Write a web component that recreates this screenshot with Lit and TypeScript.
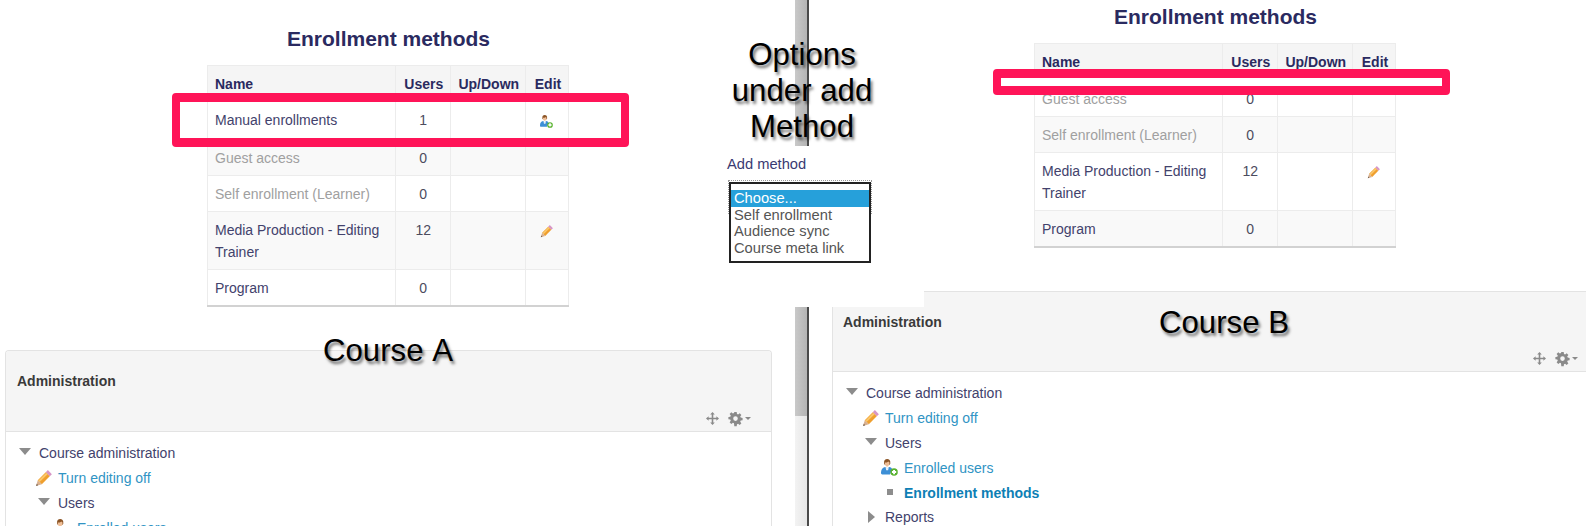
import { LitElement, html, css, svg, nothing } from "lit";
import { customElement } from "lit/decorators.js";

const pencil = svg`<path d="M12.100.1l3.800 3.800-2 2-3.800-3.800z" fill="#d796c6"/><path d="M10.100 2.100l3.800 3.800-7.500 7.500-3.800-3.800z" fill="#ef9f2e"/><path d="M10.500 2.500l1.400 1.400-7.500 7.500-1.400-1.400z" fill="#fbc76a"/><path d="M2.600 9.600l3.800 3.800L1 15z" fill="#d9b08e"/><path d="M1.700 13l1.300 1.300L1 15z" fill="#6b5a4c"/>`;

const userAdd = svg`<path d="M2.900 3.900C2.500 1.400 4 0 5.800 0s3.300 1.400 2.900 3.900l-.5 1.400H3.400z" fill="#8c5526"/><path d="M3.500 3.500c.8 0 2.800-.3 3.500-1.100.4.500.9.800 1.100 1 0 2.100-1 3.800-2.300 3.800S3.500 5.500 3.500 3.500z" fill="#efbf98"/><path d="M0 13c0-3 1.200-5 3.800-5.500l2 1.300 2-1.300c1.200.2 2.100.8 2.700 1.700L8.500 14.500H1.200C.4 14.500 0 13.900 0 13z" fill="#3d8fd6"/><path d="M4.300 7.700l1.500 1.100 1.500-1.100-.6 3H4.900z" fill="#e9f2fa"/><circle cx="12.300" cy="12.300" r="3.500" fill="#58b22e"/><path d="M11.400 10.300h1.800v1.100h1.100v1.800h-1.100v1.100h-1.800v-1.100h-1.100v-1.800h1.100z" fill="#fff"/>`;

const moveIcon = svg`<path d="M6.500 0l2.300 2.600H7.300v3.200h3.100V4.300L13 6.500l-2.600 2.200V7.200H7.300v3.200h1.500L6.500 13l-2.300-2.600h1.500V7.200H2.600v1.500L0 6.500l2.600-2.200v1.500h3.100V2.600H4.200z" fill="#8a8a8a"/>`;

const gearIcon = svg`<path fill-rule="evenodd" d="M5.300 0h2.400l.3 1.900 1.100.5L10.700 1.200l1.700 1.700-1.200 1.600.5 1.100 1.900.3v2.400l-1.900.3-.5 1.100 1.200 1.600-1.700 1.700-1.600-1.200-1.100.5-.3 1.900H5.300L5 11.300l-1.100-.5-1.600 1.200L.6 10.300l1.200-1.600-.5-1.100L-.6 7.300V5l1.900-.3.5-1.100L.6 2l1.700-1.700 1.600 1.200L5 1zM6.500 4.300a2.300 2.300 0 100 4.600 2.300 2.300 0 000-4.600z" fill="#8a8a8a"/>`;

interface Row { name: string; users: string; off?: boolean; icon?: "user" | "pencil"; cls?: string; spacer?: boolean }

const rowsA: Row[] = [
  { name: "Manual enrollments", users: "1", icon: "user", cls: "manual white" },
  { name: "Guest access", users: "0", off: true, cls: "tint" },
  { name: "Self enrollment (Learner)", users: "0", off: true, cls: "white" },
  { name: "Media Production - Editing Trainer", users: "12", icon: "pencil", cls: "tint" },
  { name: "Program", users: "0", cls: "white" },
];
const rowsB: Row[] = [
  { name: "", users: "", spacer: true },
  { name: "Guest access", users: "0", off: true, cls: "white" },
  { name: "Self enrollment (Learner)", users: "0", off: true, cls: "tint" },
  { name: "Media Production - Editing Trainer", users: "12", icon: "pencil", cls: "white" },
  { name: "Program", users: "0", cls: "tint" },
];

@customElement("enrol-table")
export class EnrolTable extends LitElement {
  static properties = { rows: { attribute: false } };
  rows: Row[] = [];
  static styles = css`
    :host { display: block; width: 361px; font-family: "Liberation Sans", Arial, sans-serif; }
    h2 { margin: 0 0 14px; padding: 1px 0 0 2px; font-size: 21px; line-height: 24px; font-weight: 700; color: #2a2a60; text-align: center; white-space: nowrap; }
    table { width: 361px; border-collapse: collapse; table-layout: fixed; font-size: 14px; line-height: 22px; border: 1px solid #cfcfcf; border-bottom: 2px solid #d2d2d2; }
    .c1 { width: 188px; } .c2 { width: 54.5px; } .c3 { width: 75.5px; } .c4 { width: 43px; }
    th, td { padding: 7px 8px 6px 7px; border: 1px solid #ececec; vertical-align: top; text-align: left; }
    th { background: #f5f5f5; color: #2a2a60; font-weight: 700; white-space: nowrap; }
    th.mid { padding-left: 2px; padding-right: 0; text-align: center; }
    td { color: #42426c; }
    td.mid { padding-left: 1px; padding-right: 0; text-align: center; color: #4c4c5e; }
    td.off { color: #a0a0a0; }
    tr.white td { background: #fff; }
    tr.tint td { background: #f9f9f9; }
    tr.manual td { height: 24px; }
    tr.spacer td { padding: 0; height: 0; line-height: 0; }
    svg { display: block; width: 13px; height: 13px; margin: 6px auto 0; }
  `;
  render() {
    return html`
      <h2>Enrollment methods</h2>
      <table>
        <colgroup><col class="c1" /><col class="c2" /><col class="c3" /><col class="c4" /></colgroup>
        <tr><th>Name</th><th class="mid">Users</th><th class="mid">Up/Down</th><th class="mid">Edit</th></tr>
        ${this.rows.map((r) => r.spacer
          ? html`<tr class="spacer"><td></td><td></td><td></td><td></td></tr>`
          : html`<tr class=${r.cls ?? ""}>
              <td class=${r.off ? "off" : ""}>${r.name}</td>
              <td class="mid">${r.users}</td>
              <td></td>
              <td>${r.icon === "user"
                ? html`<svg viewBox="0 0 16 16">${userAdd}</svg>`
                : r.icon === "pencil" ? html`<svg viewBox="0 0 16 16">${pencil}</svg>` : nothing}</td>
            </tr>`)}
      </table>
    `;
  }
}

@customElement("admin-block")
export class AdminBlock extends LitElement {
  static properties = { full: { type: Boolean } };
  full = false;
  static styles = css`
    :host { display: block; width: 767px; height: 260px; box-sizing: border-box; overflow: hidden; background: #fff; border: 1px solid #e3e3e3; border-bottom: 0; border-radius: 4px 4px 0 0; font-family: "Liberation Sans", Arial, sans-serif; font-size: 14px; line-height: 20px; color: #42426c; }
    header { height: 80px; box-sizing: border-box; padding: 20px 10px 0; background: #f5f5f5; border-bottom: 1px solid #e3e3e3; display: flex; flex-direction: column; justify-content: space-between; }
    :host(:not([full])) header { height: 81px; padding-left: 11px; }
    h3 { margin: 0; font-size: 14px; line-height: 20px; font-weight: 700; color: #3a3a3a; }
    .tools { display: flex; justify-content: flex-end; align-items: center; gap: 8px; padding: 0 10px 6px 0; }
    .tools svg { display: block; width: 13px; height: 13px; overflow: visible; }
    .tools .move { margin-right: 2px; }
    .caret { width: 0; height: 0; margin-left: -5px; border: 3.500px solid transparent; border-top: 3.500px solid #8a8a8a; border-bottom: 0; }
    ul { list-style: none; margin: 0; padding: 9px 0 0 13px; }
    ul ul { padding: 0 0 0 19px; }
    .row { display: flex; align-items: center; height: 24.800px; gap: 8px; }
    .slot { flex: none; width: 12px; height: 17px; display: flex; align-items: center; justify-content: center; }
    .slot svg { display: block; flex: none; overflow: visible; }
    a { color: #3094c4; text-decoration: none; }
    a.cur { color: #0e7fb5; font-weight: 700; }
    .leaf { margin-left: -3px; gap: 6px; }
    .leaf .slot { width: 17px; }
    .down { width: 12px; height: 7px; margin-top: -3px; }
    .right { width: 7px; height: 12px; }
    .bullet { width: 6px; height: 6px; background: #8d8d8d; margin-top: -2px; }
  `;
  private down() { return html`<span class="slot"><svg class="down" viewBox="0 0 12 7"><path d="M0 0h12L6 7z" fill="#8c8c8c"/></svg></span>`; }
  render() {
    return html`
      <header>
        <h3>Administration</h3>
        <div class="tools">
          <svg class="move" viewBox="0 0 13 13">${moveIcon}</svg>
          <svg viewBox="0 0 13 13">${gearIcon}</svg>
          <span class="caret"></span>
        </div>
      </header>
      <ul>
        <li class="row">${this.down()}<span>Course administration</span></li>
        <ul>
          <li class="row leaf"><span class="slot"><svg width="17" height="17" viewBox="0 0 16 16">${pencil}</svg></span><a href="#">Turn editing off</a></li>
          <li class="row">${this.down()}<span>Users</span></li>
          <ul>
            <li class="row leaf"><span class="slot"><svg width="17" height="17" viewBox="0 0 16 16">${userAdd}</svg></span><a href="#">Enrolled users</a></li>
            ${this.full ? html`<li class="row leaf"><span class="slot"><span class="bullet"></span></span><a class="cur" href="#">Enrollment methods</a></li>` : nothing}
          </ul>
          ${this.full ? html`<li class="row"><span class="slot"><svg class="right" viewBox="0 0 7 12"><path d="M0 0l7 6-7 6z" fill="#8c8c8c"/></svg></span><span>Reports</span></li>` : nothing}
        </ul>
      </ul>
    `;
  }
}

@customElement("app-root")
export class AppRoot extends LitElement {
  static styles = css`
    :host { display: block; position: relative; width: 1586px; height: 526px; overflow: hidden; background: #fff; font-family: "Liberation Sans", Arial, sans-serif; }
    .abs { position: absolute; }
    .strip { left: 795px; width: 12px; background: linear-gradient(90deg, #c9c9c9, #b4b4b4); border-right: 2px solid #4a4a4a; }
    .strip.s1 { top: 0; height: 146px; }
    .strip.s2 { top: 307px; height: 109px; }
    .strip.s3 { top: 416px; height: 110px; background: linear-gradient(90deg, #f3f3f3, #e6e6e6); }
    .tableA { left: 207px; top: 26px; }
    .tableB { left: 1034px; top: 4px; }
    .adminA { left: 5px; top: 350px; }
    .adminB { left: 832px; top: 291px; }
    .cover { left: 810px; top: 285px; width: 114px; height: 22px; background: #fff; }
    .pink { box-sizing: border-box; border-style: solid; border-color: #ff1458; border-radius: 4px; }
    .pinkA { left: 172px; top: 93px; width: 457px; height: 54px; border-width: 9px 8px; }
    .pinkB { left: 993px; top: 69px; width: 457px; height: 26px; border-width: 9px 8px; background: #fff; }
    .note { color: #000; font-size: 31.200px; font-kerning: none; line-height: 36px; text-align: center; text-shadow: 2px 3px 3px rgba(0,0,0,.55); white-space: nowrap; }
    .opts { left: 702px; top: 37px; width: 200px; }
    .courseA { left: 323px; top: 333px; }
    .courseB { left: 1159px; top: 305px; }
    .picker { left: 727px; top: 155px; width: 146px; font-size: 14.700px; }
    .picker .label { color: #3a3a72; line-height: 18px; height: 25px; }
    .frame { position: relative; margin: 2px 0 0 2px; width: 142px; }
    .frame::before { content: ""; position: absolute; left: -1px; right: -1px; top: -2px; height: 33px; border: 1px dotted #999; border-bottom: 0; }
    .box { position: relative; box-sizing: border-box; width: 142px; height: 81px; border: 2px solid #222; background: #fff; padding: 6px 0 0; }
    .opt { height: 16.500px; line-height: 16.500px; padding-left: 3px; color: #555; white-space: nowrap; }
    .opt.sel { background: #26a0da; color: #fff; }
  `;
  render() {
    return html`
      <div class="abs strip s1"></div>
      <div class="abs strip s2"></div>
      <div class="abs strip s3"></div>
      <enrol-table class="abs tableA" .rows=${rowsA}></enrol-table>
      <enrol-table class="abs tableB" .rows=${rowsB}></enrol-table>
      <admin-block class="abs adminA"></admin-block>
      <admin-block class="abs adminB" full></admin-block>
      <div class="abs cover"></div>
      <div class="abs pink pinkA"></div>
      <div class="abs pink pinkB"></div>
      <div class="abs note opts">Options<br />under add<br />Method</div>
      <div class="abs note courseA">Course A</div>
      <div class="abs note courseB">Course B</div>
      <div class="abs picker">
        <div class="label">Add method</div>
        <div class="frame">
          <div class="box" role="listbox">
            <div class="opt sel">Choose...</div>
            <div class="opt">Self enrollment</div>
            <div class="opt">Audience sync</div>
            <div class="opt">Course meta link</div>
          </div>
        </div>
      </div>
    `;
  }
}
